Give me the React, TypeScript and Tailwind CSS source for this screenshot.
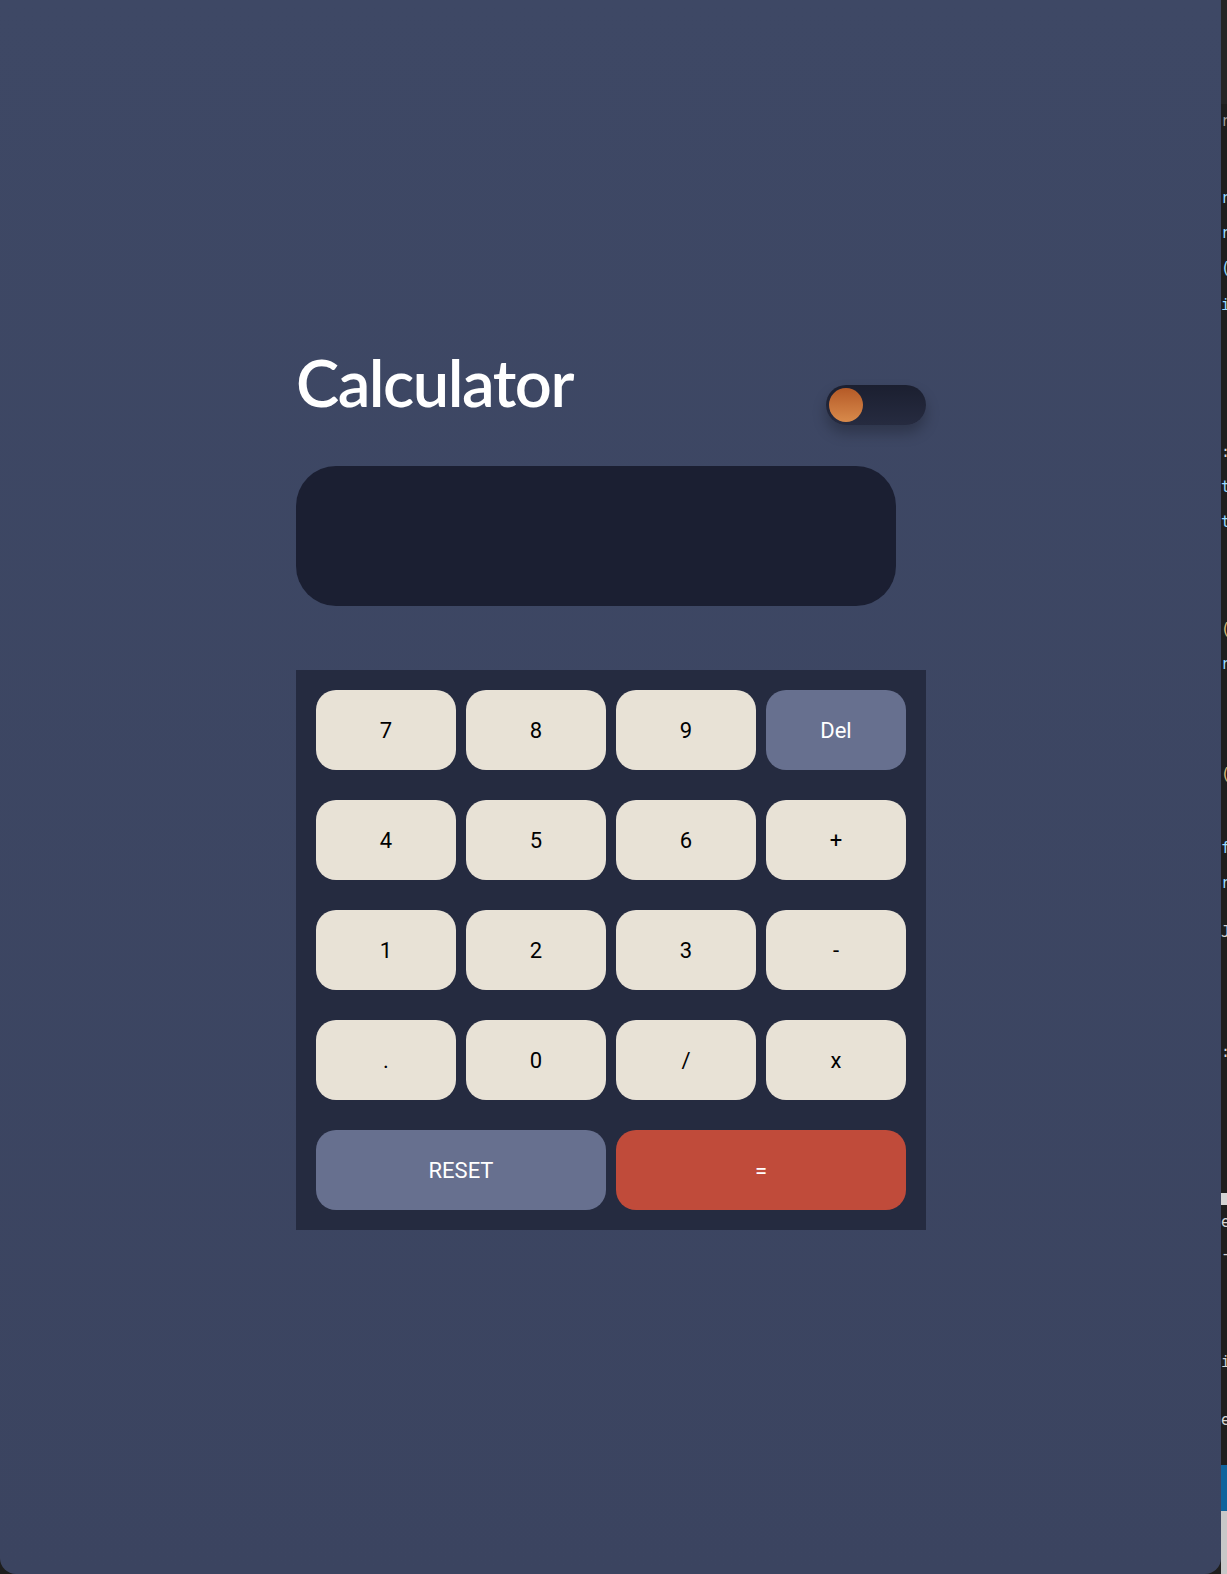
const rows: { label: string; kind?: "op" | "del" }[][] = [
  [{ label: "7" }, { label: "8" }, { label: "9" }, { label: "Del", kind: "del" }],
  [{ label: "4" }, { label: "5" }, { label: "6" }, { label: "+" }],
  [{ label: "1" }, { label: "2" }, { label: "3" }, { label: "-" }],
  [{ label: "." }, { label: "0" }, { label: "/" }, { label: "x" }],
];

function Key({ label, kind }: { label: string; kind?: "op" | "del" }) {
  const base =
    "h-20 rounded-[20px] flex items-center justify-center text-[22px] font-['Roboto',sans-serif]";
  if (kind === "del") {
    return <button className={`${base} bg-[#67708f] text-white`}>{label}</button>;
  }
  return <button className={`${base} bg-[#e8e2d6] text-black`}>{label}</button>;
}

function Toggle() {
  return (
    <div className="mt-[35px] h-10 w-[100px] rounded-full bg-gradient-to-b from-[#1b1f30] to-[#262b40] p-[3px] shadow-[0_8px_14px_rgba(0,0,0,0.25)]">
      <div className="h-[34px] w-[34px] rounded-full bg-gradient-to-b from-[#b55a27] to-[#d88a4b]" />
    </div>
  );
}

function EditorStrip() {
  return (
    <div className="w-[6px] shrink-0 overflow-hidden bg-[#1e1e1e] font-['DejaVu_Sans_Mono',monospace] text-[15px] leading-none">
      <div className="h-[104px] bg-[#252526]" />
      <div className="mt-[10px] text-[#9d9d9d]">r</div>
      <div className="mt-[62px] text-[#9cdcfe]">r</div>
      <div className="mt-[20px] text-[#9cdcfe]">r</div>
      <div className="mt-[20px] text-[#9cdcfe]">(</div>
      <div className="mt-[22px] text-[#9cdcfe]">i</div>
      <div className="mt-[132px] text-[#d4d4d4]">:</div>
      <div className="mt-[20px] text-[#9cdcfe]">t</div>
      <div className="mt-[20px] text-[#9cdcfe]">t</div>
      <div className="mt-[92px] text-[#d7ba7d]">(</div>
      <div className="mt-[20px] text-[#9cdcfe]">r</div>
      <div className="mt-[95px] text-[#d7ba7d]">(</div>
      <div className="mt-[59px] text-[#9cdcfe]">f</div>
      <div className="mt-[20px] text-[#9cdcfe]">r</div>
      <div className="mt-[34px] text-[#d4d4d4]">J</div>
      <div className="mt-[105px] text-[#d4d4d4]">:</div>
      <div className="mt-[133px] h-[12px] bg-[#d4d4d4]" />
      <div className="mt-[10px] text-[#d4d4d4]">e</div>
      <div className="mt-[17px] text-[#d4d4d4]">-</div>
      <div className="mt-[93px] text-[#d4d4d4]">i</div>
      <div className="mt-[43px] text-[#d4d4d4]">e</div>
      <div className="mt-[37px] h-[46px] bg-[#0e639c]" />
      <div className="h-[80px] bg-[#c8c8c8]" />
    </div>
  );
}

export default function App() {
  return (
    <div className="flex min-h-[1574px] w-full bg-[#1e1e1e]">
      <main className="h-[1574px] flex-1 rounded-b-[16px] bg-gradient-to-b from-[#3e4865] to-[#3b4460] pl-[296px] pt-[350px]">
        <div className="w-[630px]">
          <div className="flex items-start justify-between">
            <h1 className="font-['Lato',sans-serif] text-[65px] font-semibold leading-none tracking-[-1.5px] text-white">
              Calculator
            </h1>
            <Toggle />
          </div>

          <div className="mt-[41px] h-[140px] w-[600px] rounded-[40px] bg-[#1b1f32]" />

          <div className="mt-[64px] bg-[#252b40] p-5">
            <div className="flex flex-col gap-[30px]">
              {rows.map((row, i) => (
                <div key={i} className="grid grid-cols-4 gap-[10px]">
                  {row.map((k) => (
                    <Key key={k.label} label={k.label} kind={k.kind} />
                  ))}
                </div>
              ))}
              <div className="grid grid-cols-2 gap-[10px]">
                <button className="h-20 rounded-[20px] bg-[#67708f] font-['Roboto',sans-serif] text-[22px] text-white">
                  RESET
                </button>
                <button className="h-20 rounded-[20px] bg-[#c04b3a] font-['Roboto',sans-serif] text-[22px] text-white">
                  =
                </button>
              </div>
            </div>
          </div>
        </div>
      </main>
      <EditorStrip />
    </div>
  );
}
